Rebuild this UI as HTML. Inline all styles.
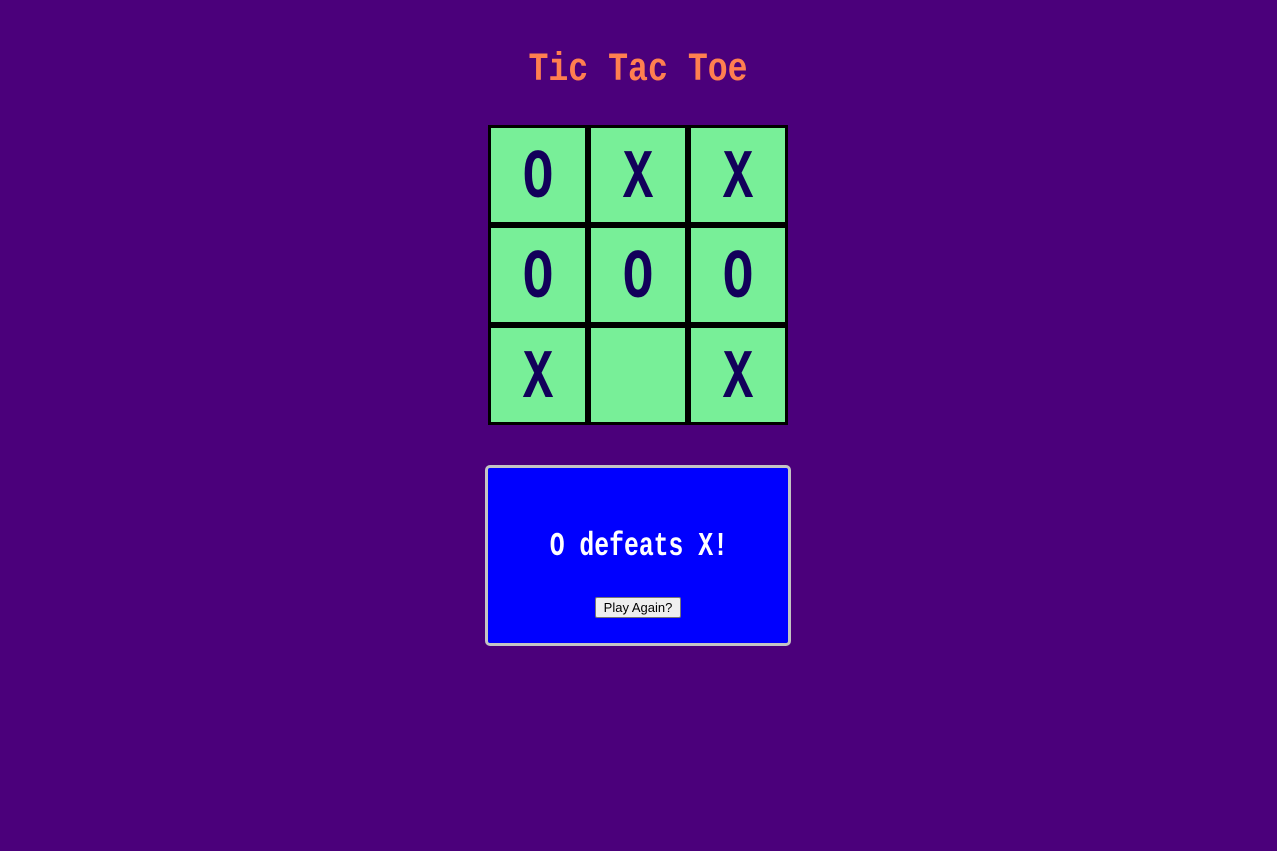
<!DOCTYPE html>
<html><head><style>
body{margin:0;width:1277px;height:851px;background:#4b007b;position:relative;overflow:hidden;font-family:"Liberation Mono",monospace}
.t{position:absolute;left:0;width:1277px;text-align:center;font-weight:bold;white-space:nowrap}
.t span{display:inline-block}
#title{top:46px;color:#ff7f50;font-size:40px;line-height:50px}
#title span{transform:scaleX(0.83)}
#board{position:absolute;left:488px;top:125px;width:300px;height:300px;background:#000}
.c{position:absolute;width:94px;height:94px;background:#78ef98;color:#12005a;font-weight:bold;font-size:70px;line-height:104px;text-align:center}
.c span{display:inline-block;transform:scaleX(0.72)}
#panel{position:absolute;left:485px;top:465px;width:300px;height:175px;border:3px solid #c4c4c4;border-radius:5px;background:#0000ff}
#msg{top:527px;color:#fff;font-size:33px;line-height:40px}
#msg span{transform:scaleX(0.75)}
button{position:absolute;left:595px;top:597px;width:86px;height:21px;font-family:"Liberation Sans",sans-serif;font-size:13px;background:#efefef;border:1px solid #767676;border-radius:2px;padding:0}
</style></head><body>
<div class="t" id="title"><span>Tic Tac Toe</span></div>
<div id="board">
<div class="c" style="left:3px;top:3px"><span>O</span></div>
<div class="c" style="left:103px;top:3px"><span>X</span></div>
<div class="c" style="left:203px;top:3px"><span>X</span></div>
<div class="c" style="left:3px;top:103px"><span>O</span></div>
<div class="c" style="left:103px;top:103px"><span>O</span></div>
<div class="c" style="left:203px;top:103px"><span>O</span></div>
<div class="c" style="left:3px;top:203px"><span>X</span></div>
<div class="c" style="left:103px;top:203px"></div>
<div class="c" style="left:203px;top:203px"><span>X</span></div>
</div>
<div id="panel"></div>
<div class="t" id="msg"><span>O defeats X!</span></div>
<button>Play Again?</button>
</body></html>
